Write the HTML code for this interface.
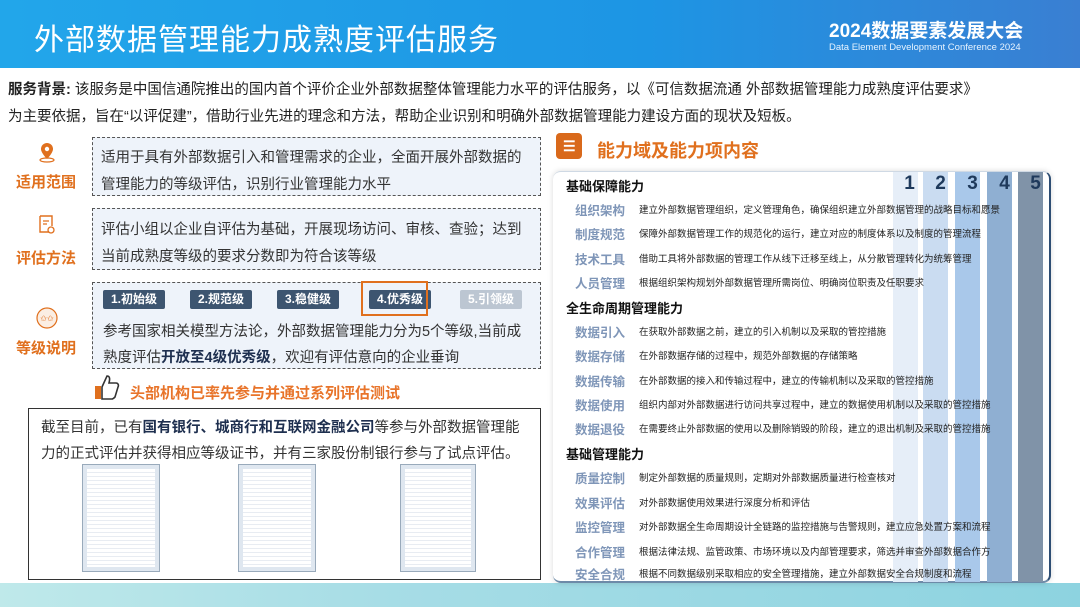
<!DOCTYPE html>
<html><head><meta charset="utf-8"><style>
*{margin:0;padding:0;box-sizing:border-box}
body{width:1080px;height:607px;position:relative;overflow:hidden;background:#fff;font-family:"Liberation Sans","Noto Sans CJK SC",sans-serif;color:#222}
.a{position:absolute;white-space:nowrap}
.hdr{left:0;top:0;width:1080px;height:68px;background:linear-gradient(90deg,#22a6ea,#1d95e4 60%,#3a7fd2)}
.box{position:absolute;border:1.5px dashed #555;background:#eef3fa}
.lab{position:absolute;color:#e0701e;font-weight:bold;font-size:15px;width:70px;text-align:center;left:11px}
.bt{position:absolute;top:290px;height:19px;width:62px;background:#3d5570;color:#fff;font-size:12px;font-weight:bold;text-align:center;line-height:19px;border-radius:2px}
.t14{font-size:14.5px;color:#333}
.col{position:absolute;top:172px;height:410px;width:25px}
.h{font-weight:bold;font-size:13px;color:#111}
.k{font-size:12.5px;color:#7f96b8;font-weight:bold}
.d{font-size:9.5px;color:#222}
.n{position:absolute;top:173px;font-size:19px;font-weight:bold;color:#1f3a5c;width:25px;text-align:center}
.cert{position:absolute;border:1px solid #9ab;background:repeating-linear-gradient(180deg,#fff 0 3px,#e8ecf2 3px 4px);box-shadow:inset 0 0 0 4px #dfe7f0}
</style></head><body>
<div class="a hdr"></div>
<div class="a" style="left:34px;top:15px;font-size:30px;color:#fff;letter-spacing:1px">外部数据管理能力成熟度评估服务</div>
<div class="a" style="left:829px;top:16px;font-size:19px;color:#fff;font-weight:bold">2024数据要素发展大会</div>
<div class="a" style="left:829px;top:42px;font-size:9.5px;color:#e6f3ff">Data Element Development Conference 2024</div>

<div class="a" style="left:8px;top:78px;font-size:14.5px;color:#222"><b>服务背景:</b> 该服务是中国信通院推出的国内首个评价企业外部数据整体管理能力水平的评估服务，以《可信数据流通 外部数据管理能力成熟度评估要求》</div>
<div class="a" style="left:8px;top:105px;font-size:14.5px;color:#222">为主要依据，旨在“以评促建”，借助行业先进的理念和方法，帮助企业识别和明确外部数据管理能力建设方面的现状及短板。</div>

<svg class="a" style="left:36px;top:141px" width="22" height="22" viewBox="0 0 22 22"><path d="M11 2a6 6 0 0 0-6 6c0 4 6 10 6 10s6-6 6-10a6 6 0 0 0-6-6z" fill="#e0701e"/><circle cx="11" cy="8" r="2.2" fill="#fff"/><ellipse cx="11" cy="19" rx="7" ry="2" fill="none" stroke="#e0701e" stroke-width="1.2"/></svg>
<div class="lab" style="top:171px">适用范围</div>
<svg class="a" style="left:37px;top:213px" width="20" height="22" viewBox="0 0 20 22"><path d="M3 3h12v10M3 3v16h9" fill="none" stroke="#e0701e" stroke-width="1.4"/><path d="M6 8h6M6 11h4" stroke="#e0701e" stroke-width="1.3"/><circle cx="14" cy="17" r="3" fill="none" stroke="#e0701e" stroke-width="1.3"/></svg>
<div class="lab" style="top:247px">评估方法</div>
<svg class="a" style="left:35px;top:306px" width="24" height="24" viewBox="0 0 24 24"><circle cx="12" cy="12" r="10" fill="#fbeee3" stroke="#e0701e" stroke-width="1.2"/><text x="12" y="15" font-size="8" text-anchor="middle" fill="#e0701e">✩✩</text></svg>
<div class="lab" style="top:337px">等级说明</div>

<div class="box" style="left:92px;top:137px;width:449px;height:59px"></div>
<div class="a t14" style="left:101px;top:146px">适用于具有外部数据引入和管理需求的企业，全面开展外部数据的</div>
<div class="a t14" style="left:101px;top:173px">管理能力的等级评估，识别行业管理能力水平</div>
<div class="box" style="left:92px;top:208px;width:449px;height:62px"></div>
<div class="a t14" style="left:101px;top:218px">评估小组以企业自评估为基础，开展现场访问、审核、查验；达到</div>
<div class="a t14" style="left:101px;top:245px">当前成熟度等级的要求分数即为符合该等级</div>
<div class="box" style="left:92px;top:282px;width:449px;height:87px"></div>
<div class="bt" style="left:103px">1.初始级</div>
<div class="bt" style="left:190px">2.规范级</div>
<div class="bt" style="left:277px">3.稳健级</div>
<div class="bt" style="left:369px">4.优秀级</div>
<div class="bt" style="left:460px;background:#bcc6d2">5.引领级</div>
<div class="a" style="left:361px;top:281px;width:67px;height:35px;border:2px solid #e0701e"></div>
<div class="a t14" style="left:103px;top:320px">参考国家相关模型方法论，外部数据管理能力分为5个等级,当前成</div>
<div class="a t14" style="left:103px;top:346px">熟度评估<b style="color:#1e2f4f">开放至4级优秀级</b>，欢迎有评估意向的企业垂询</div>

<svg class="a" style="left:93px;top:373px" width="28" height="28" viewBox="0 0 28 28"><rect x="2" y="13" width="6" height="13" fill="#e0701e"/><path d="M9 14l5-11c3 0 3 3 2 7h7c2 0 3 2 2 4l-3 10c-1 1-2 2-3 2H9z" fill="none" stroke="#333" stroke-width="1.6"/></svg>
<div class="a" style="left:130px;top:382px;font-size:15px;font-weight:bold;color:#e8742a">头部机构已率先参与并通过系列评估测试</div>

<div class="a" style="left:28px;top:408px;width:513px;height:172px;border:1.5px solid #333"></div>
<div class="a" style="left:41px;top:416px;font-size:14.5px;color:#333">截至目前，已有<b style="color:#1e2f4f">国有银行、城商行和互联网金融公司</b>等参与外部数据管理能</div>
<div class="a" style="left:41px;top:442px;font-size:14.5px;color:#333">力的正式评估并获得相应等级证书，并有三家股份制银行参与了试点评估。</div>
<div class="cert" style="left:82px;top:464px;width:78px;height:108px"></div>
<div class="cert" style="left:238px;top:464px;width:78px;height:108px"></div>
<div class="cert" style="left:400px;top:464px;width:76px;height:108px"></div>

<div class="a" style="left:0;top:583px;width:1080px;height:24px;background:linear-gradient(90deg,#bfe9ea,#a7dde6 35%,#8dd3e0)"></div>

<div class="a" style="left:556px;top:133px;width:26px;height:26px;border-radius:4px;background:#d9691b"></div>
<div class="a" style="left:563px;top:138px;color:#fff;font-size:14px;font-weight:bold">☰</div>
<div class="a" style="left:597px;top:137px;font-size:18px;font-weight:bold;color:#e0701e">能力域及能力项内容</div>

<div class="a" style="left:553px;top:171px;width:498px;height:412px;background:#fff;border-radius:8px;border-right:2px solid #2d4d73;border-top:1px solid #cfd9e4;border-bottom:2px solid #6d8aa8;box-shadow:0 0 6px rgba(0,0,0,.15)"></div>
<div class="col" style="left:893px;background:#e6eef8"></div>
<div class="col" style="left:923px;background:#cadcf1"></div>
<div class="col" style="left:955px;background:#a9c8ea"></div>
<div class="col" style="left:987px;background:#8fafd2"></div>
<div class="col" style="left:1018px;background:#8093a8"></div>
<div class="n" style="left:897px">1</div>
<div class="n" style="left:928px">2</div>
<div class="n" style="left:960px">3</div>
<div class="n" style="left:992px">4</div>
<div class="n" style="left:1023px">5</div>

<div class="a h" style="left:566px;top:176px">基础保障能力</div>
<div class="a k" style="left:575px;top:200px">组织架构</div><div class="a d" style="left:639px;top:202px">建立外部数据管理组织，定义管理角色，确保组织建立外部数据管理的战略目标和愿景</div>
<div class="a k" style="left:575px;top:224px">制度规范</div><div class="a d" style="left:639px;top:226px">保障外部数据管理工作的规范化的运行，建立对应的制度体系以及制度的管理流程</div>
<div class="a k" style="left:575px;top:249px">技术工具</div><div class="a d" style="left:639px;top:251px">借助工具将外部数据的管理工作从线下迁移至线上，从分散管理转化为统筹管理</div>
<div class="a k" style="left:575px;top:273px">人员管理</div><div class="a d" style="left:639px;top:275px">根据组织架构规划外部数据管理所需岗位、明确岗位职责及任职要求</div>
<div class="a h" style="left:566px;top:298px">全生命周期管理能力</div>
<div class="a k" style="left:575px;top:322px">数据引入</div><div class="a d" style="left:639px;top:324px">在获取外部数据之前，建立的引入机制以及采取的管控措施</div>
<div class="a k" style="left:575px;top:346px">数据存储</div><div class="a d" style="left:639px;top:348px">在外部数据存储的过程中，规范外部数据的存储策略</div>
<div class="a k" style="left:575px;top:371px">数据传输</div><div class="a d" style="left:639px;top:373px">在外部数据的接入和传输过程中，建立的传输机制以及采取的管控措施</div>
<div class="a k" style="left:575px;top:395px">数据使用</div><div class="a d" style="left:639px;top:397px">组织内部对外部数据进行访问共享过程中，建立的数据使用机制以及采取的管控措施</div>
<div class="a k" style="left:575px;top:419px">数据退役</div><div class="a d" style="left:639px;top:421px">在需要终止外部数据的使用以及删除销毁的阶段，建立的退出机制及采取的管控措施</div>
<div class="a h" style="left:566px;top:444px">基础管理能力</div>
<div class="a k" style="left:575px;top:468px">质量控制</div><div class="a d" style="left:639px;top:470px">制定外部数据的质量规则，定期对外部数据质量进行检查核对</div>
<div class="a k" style="left:575px;top:493px">效果评估</div><div class="a d" style="left:639px;top:495px">对外部数据使用效果进行深度分析和评估</div>
<div class="a k" style="left:575px;top:517px">监控管理</div><div class="a d" style="left:639px;top:519px">对外部数据全生命周期设计全链路的监控措施与告警规则，建立应急处置方案和流程</div>
<div class="a k" style="left:575px;top:542px">合作管理</div><div class="a d" style="left:639px;top:544px">根据法律法规、监管政策、市场环境以及内部管理要求，筛选并审查外部数据合作方</div>
<div class="a k" style="left:575px;top:564px">安全合规</div><div class="a d" style="left:639px;top:566px">根据不同数据级别采取相应的安全管理措施，建立外部数据安全合规制度和流程</div>
</body></html>
